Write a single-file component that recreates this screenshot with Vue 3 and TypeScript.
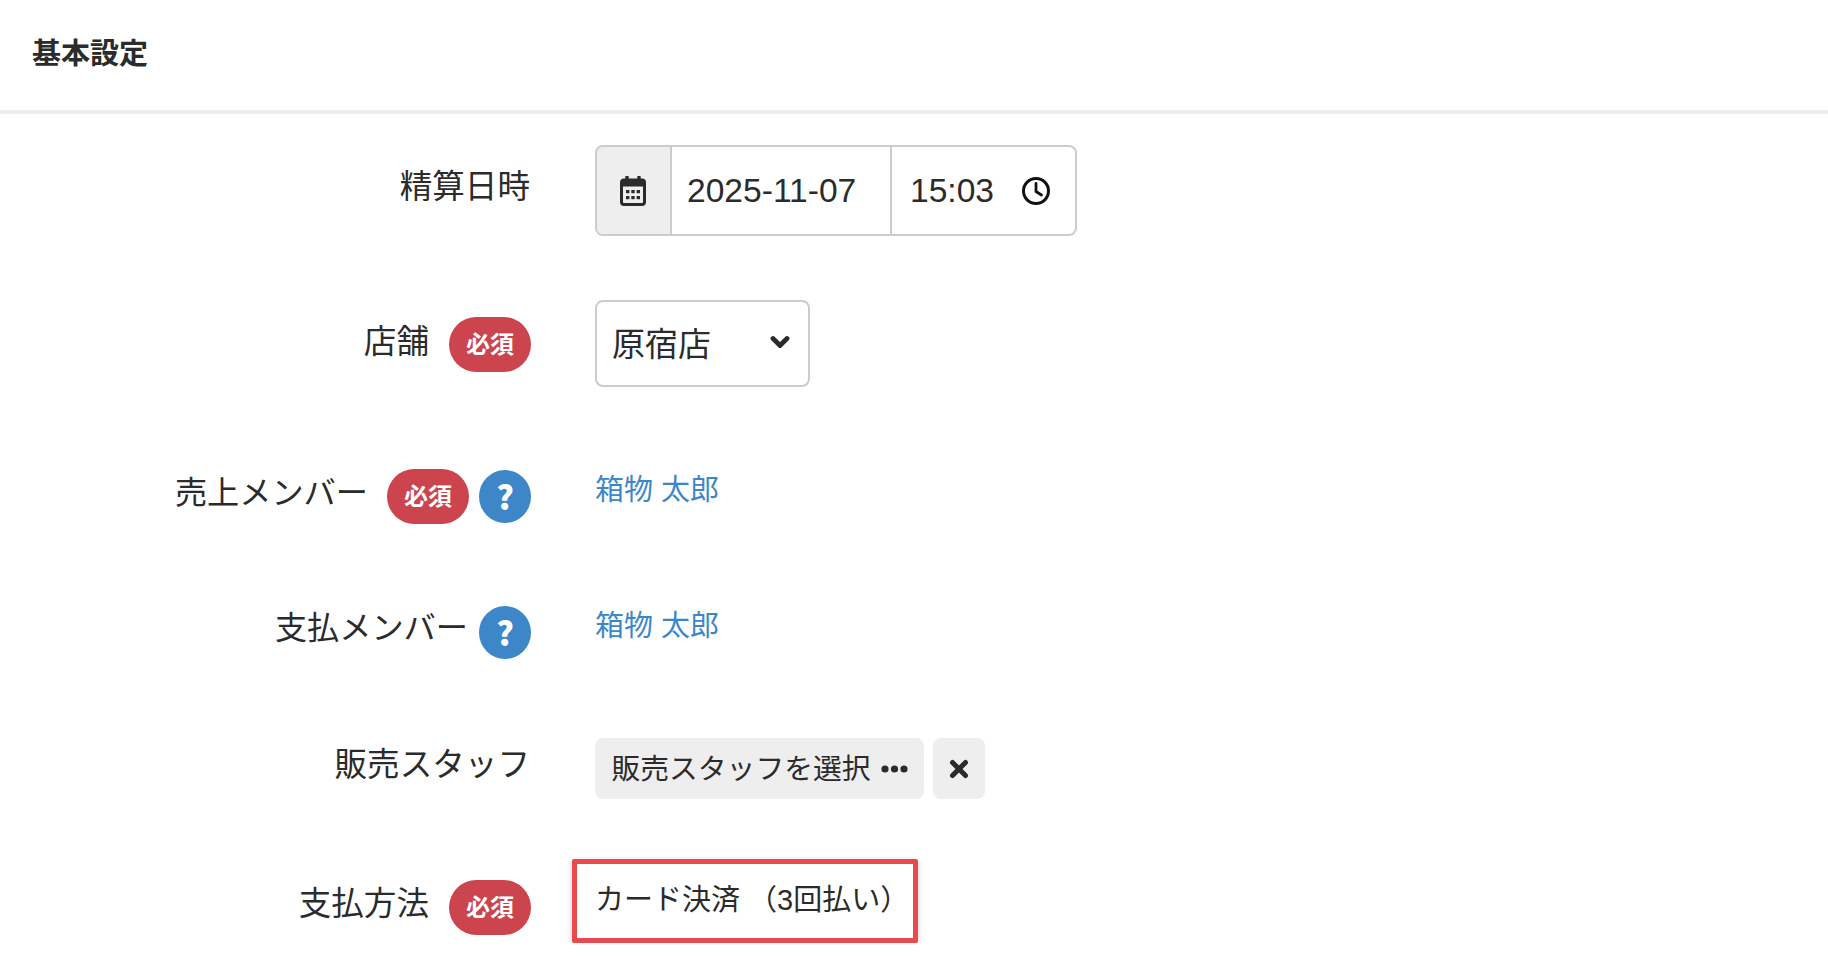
<template>
  <div class="page">
    <header class="head">
      <h1 class="title">基本設定</h1>
    </header>

    <div class="form">
      <div class="row row-date">
        <div class="label"><span class="txt">精算日時</span></div>
        <div class="date-group">
          <div class="cal-cell">
            <svg width="26" height="30" viewBox="0 0 26 30">
              <path d="M7 1v5M19 1v5" stroke="#2b2b2b" stroke-width="3.4" stroke-linecap="round" />
              <rect x="1.5" y="4" width="23" height="24.5" rx="2.5" fill="none" stroke="#2b2b2b" stroke-width="3" />
              <rect x="1.5" y="4" width="23" height="6.5" fill="#2b2b2b" />
              <g fill="#2b2b2b">
                <rect v-for="d in calDots" :key="d.x + '-' + d.y" :x="d.x" :y="d.y" width="3.4" height="3.2" />
              </g>
            </svg>
          </div>
          <div class="date-cell">2025-11-07</div>
          <div class="time-cell">
            <span>15:03</span>
            <svg width="30" height="30" viewBox="0 0 30 30">
              <circle cx="15" cy="15" r="12.5" fill="none" stroke="#111" stroke-width="3" />
              <path d="M15 7.5V15.5L20.5 19" fill="none" stroke="#111" stroke-width="2.8" stroke-linecap="round" stroke-linejoin="round" />
            </svg>
          </div>
        </div>
      </div>

      <div class="row row-shop">
        <div class="label"><span class="txt">店舗</span><span class="req">必須</span></div>
        <div class="select">
          <span>原宿店</span>
          <svg class="chev" width="20" height="14" viewBox="0 0 20 14">
            <path d="M3 3.5L10 10.5L17 3.5" fill="none" stroke="#2b2b2b" stroke-width="4.8" stroke-linecap="round" stroke-linejoin="round" />
          </svg>
        </div>
      </div>

      <div class="row row-sales">
        <div class="label"><span class="txt">売上メンバー</span><span class="req req-next">必須</span><span class="help">?</span></div>
        <a class="link">箱物 太郎</a>
      </div>

      <div class="row row-payer">
        <div class="label"><span class="txt">支払メンバー</span><span class="help">?</span></div>
        <a class="link">箱物 太郎</a>
      </div>

      <div class="row row-staff">
        <div class="label"><span class="txt">販売スタッフ</span></div>
        <div class="staff">
          <button class="staff-btn" type="button">
            <span>販売スタッフを選択</span>
            <svg width="27" height="8" viewBox="0 0 27 8">
              <circle cx="4" cy="4" r="3.6" fill="#2b2b2b" />
              <circle cx="13.5" cy="4" r="3.6" fill="#2b2b2b" />
              <circle cx="23" cy="4" r="3.6" fill="#2b2b2b" />
            </svg>
          </button>
          <button class="clear-btn" type="button">
            <svg width="20" height="20" viewBox="0 0 20 20">
              <path d="M3.5 3.5L16.5 16.5M16.5 3.5L3.5 16.5" stroke="#2b2b2b" stroke-width="5" stroke-linecap="round" />
            </svg>
          </button>
        </div>
      </div>

      <div class="row row-pay">
        <div class="label"><span class="txt">支払方法</span><span class="req">必須</span></div>
        <div class="pay-box">カード決済 （3回払い）</div>
      </div>
    </div>
  </div>
</template>

<script setup lang="ts">
// カレンダーアイコンの中の点
const calDots: { x: number; y: number }[] = []
for (const y of [14, 20]) {
  for (const x of [6, 11.3, 16.6]) {
    calDots.push({ x, y })
  }
}
</script>

<style scoped>
.page {
  width: 1828px;
  color: #2b2b2b;
  font-family: "Liberation Sans", "Noto Sans CJK JP", sans-serif;
}

.head {
  height: 114px;
  box-sizing: border-box;
  border-bottom: 4px solid #eeeeee;
  padding: 36px 0 0 32px;
}

.title {
  margin: 0;
  font-size: 29px;
  line-height: 36px;
  font-weight: 700;
}

.form {
  padding-top: 31px;
}

.row {
  display: grid;
  grid-template-columns: 531px auto;
  column-gap: 64px;
  justify-content: start;
  align-items: start;
}

.row-date {
  margin-bottom: 64px;
}

.row-shop {
  margin-bottom: 82px;
}

.row-sales {
  margin-bottom: 81px;
}

.row-payer {
  margin-bottom: 79px;
}

.row-staff {
  margin-bottom: 60px;
}

.label {
  display: flex;
  justify-content: flex-end;
  align-items: center;
  font-size: 32.6px;
  line-height: 46px;
}

.row-date .label {
  padding: 19px 1px 0 0;
}

.row-shop .label {
  padding-top: 17px;
}

.row-shop .txt {
  margin-bottom: 6px;
}

.row-sales .txt,
.row-payer .txt {
  margin-bottom: 8px;
  margin-right: -1px;
  font-size: 32.2px;
}

.row-staff .label {
  padding: 4px 1px 0 0;
}

.row-pay .label {
  padding-top: 21px;
}

.row-pay .txt {
  margin-bottom: 7px;
}

.req {
  width: 82px;
  height: 55px;
  margin-left: 20px;
  border-radius: 28px;
  background: #cc444e;
  color: #fff;
  font-size: 24px;
  font-weight: 700;
  line-height: 55px;
  text-align: center;
}

.req-next {
  margin-right: 10px;
}

.help {
  width: 52px;
  height: 53px;
  margin-left: 12px;
  border-radius: 50%;
  background: #3d87c8;
  color: #fff;
  font-family: "Noto Sans CJK JP", sans-serif;
  font-size: 33px;
  font-weight: 900;
  line-height: 53px;
  text-align: center;
}

.req-next + .help {
  margin-left: 0;
}

.date-group {
  display: flex;
  width: 482px;
  height: 91px;
  box-sizing: border-box;
  border: 2px solid #cccccc;
  border-radius: 8px;
  overflow: hidden;
  font-size: 33.6px;
}

.cal-cell {
  display: flex;
  align-items: center;
  justify-content: center;
  width: 75px;
  padding-right: 2px;
  box-sizing: border-box;
  background: #eeeeee;
  border-right: 2px solid #cccccc;
}

.date-cell {
  display: flex;
  align-items: center;
  width: 220px;
  box-sizing: border-box;
  padding-left: 15px;
  border-right: 2px solid #cccccc;
}

.time-cell {
  display: flex;
  flex: 1;
  align-items: center;
  justify-content: space-between;
  padding: 0 24px 0 18px;
}

.select {
  display: flex;
  align-items: center;
  justify-content: space-between;
  width: 215px;
  height: 87px;
  box-sizing: border-box;
  padding: 0 18px 0 15px;
  border: 2px solid #cccccc;
  border-radius: 8px;
  font-size: 33px;
}

.select span {
  margin-top: -4px;
}

.chev {
  margin-top: -3px;
}

.link {
  padding-top: 3px;
  color: #3d87c8;
  font-size: 29px;
  line-height: 36px;
}

.staff {
  display: flex;
  gap: 9px;
}

.staff-btn,
.clear-btn {
  display: flex;
  align-items: center;
  justify-content: center;
  height: 61px;
  border: none;
  border-radius: 8px;
  background: #eeeeee;
  color: #2b2b2b;
  font: inherit;
  font-size: 28.8px;
  padding: 0;
}

.staff-btn {
  width: 329px;
  gap: 10px;
}

.staff-btn span {
  margin-top: -5px;
}

.clear-btn {
  width: 52px;
}

.pay-box {
  width: 346px;
  height: 84px;
  box-sizing: border-box;
  margin-left: -23px;
  padding: 18px 0 0 18px;
  border: 5px solid #e84a50;
  border-radius: 2px;
  box-shadow: 0 2px 6px rgba(0, 0, 0, 0.2);
  font-size: 29px;
  line-height: 36px;
  white-space: nowrap;
}
</style>

<style>
html,
body {
  background: #fff;
}
</style>
